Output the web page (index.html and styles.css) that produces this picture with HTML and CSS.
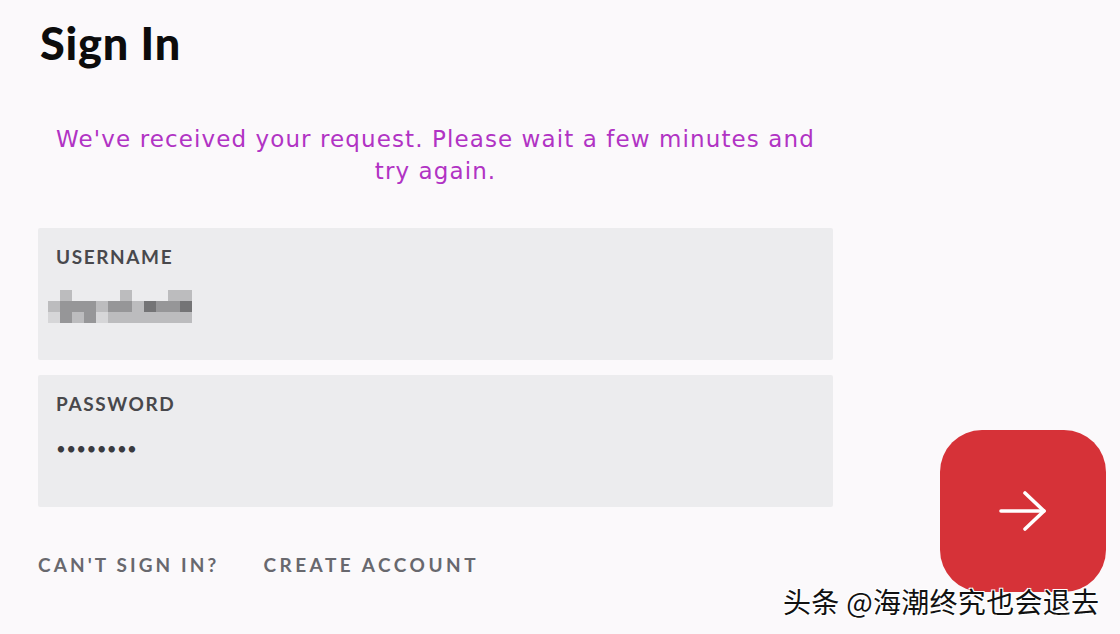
FILE: index.html
```html
<!DOCTYPE html>
<html lang="en">
<head>
  <meta charset="UTF-8">
  <title>Sign In</title>
  <link rel="stylesheet" href="styles.css">
</head>
<body>
  <div class="page">
    <h1 class="title">Sign In</h1>
    <div class="layout">
      <div class="form">
        <p class="notice">We've received your request. Please wait a few minutes and try again.</p>
        <div class="field">
          <div class="label">USERNAME</div>
          <div class="blur">
            <span></span><span class="l"></span><span></span><span></span><span></span><span></span><span class="l"></span><span></span><span></span><span></span><span class="l"></span><span class="l"></span>
            <span class="l"></span><span class="m"></span><span class="m"></span><span class="m"></span><span class="l"></span><span class="m"></span><span class="m"></span><span class="l"></span><span class="d"></span><span class="m"></span><span class="m"></span><span class="d"></span>
            <span class="f"></span><span class="m"></span><span class="l"></span><span class="m"></span><span class="f"></span><span class="l"></span><span class="l"></span><span class="l"></span><span class="l"></span><span class="l"></span><span class="l"></span><span class="l"></span>
          </div>
        </div>
        <div class="field">
          <div class="label">PASSWORD</div>
          <div class="dots">••••••••</div>
        </div>
        <div class="links">
          <a href="#">CAN'T SIGN IN?</a>
          <a href="#">CREATE ACCOUNT</a>
        </div>
      </div>
      <button class="go" aria-label="Sign in">
        <svg width="52" height="44" viewBox="0 0 52 44" fill="none" stroke="#fff" stroke-width="3.6" stroke-linecap="round" stroke-linejoin="round">
          <path d="M4 22 H47"/>
          <path d="M28 4 L47 22 L28 40"/>
        </svg>
      </button>
    </div>
  </div>
  <div class="mark">头条 @海潮终究也会退去</div>
</body>
</html>
```

FILE: styles.css
```css
body {
  margin: 0;
  background-color: #fbf9fb;
  font-family: Lato, "Open Sans", sans-serif;
  width: 1120px;
  height: 634px;
  overflow: hidden;
  position: relative;
}
.page {
  padding: 15px 0 0 38px;
}
.title {
  margin: 0 0 0 2px;
  font-size: 45px;
  font-weight: 900;
  letter-spacing: 0.8px;
  color: #0c0c0c;
  line-height: 56px;
}
.layout {
  display: flex;
  align-items: flex-start;
  gap: 107px;
}
.form {
  width: 795px;
}
.notice {
  margin: 52px auto 0;
  max-width: 775px;
  text-align: center;
  color: #b133c4;
  font-family: "DejaVu Sans", sans-serif;
  font-size: 23px;
  line-height: 32px;
  letter-spacing: 1.1px;
}
.field {
  margin-top: 41px;
  height: 132px;
  box-sizing: border-box;
  padding: 17px 18px 0;
  background-color: #ececee;
  border-radius: 2px;
}
.field + .field {
  margin-top: 15px;
}
.label {
  font-size: 19px;
  font-weight: 700;
  letter-spacing: 1.6px;
  color: #48484c;
  line-height: 24px;
}
.blur {
  display: grid;
  grid-template-columns: repeat(12, 12px);
  grid-auto-rows: 11px;
  margin: 21px 0 0 -8px;
  width: 144px;
}
.blur span { background-color: #ececee; }
.blur .f { background-color: #d6d6d8; }
.blur .l { background-color: #bcbcbe; }
.blur .m { background-color: #969698; }
.blur .d { background-color: #747476; }
.dots {
  margin-top: 22px;
  font-size: 17px;
  letter-spacing: 0.3px;
  color: #3a3a3e;
}
.links {
  display: flex;
  gap: 44px;
  margin-top: 46px;
}
.links a {
  color: #68686e;
  text-decoration: none;
  font-size: 19px;
  font-weight: 700;
  letter-spacing: 3.1px;
}
.links a + a {
  letter-spacing: 3.5px;
}
.go {
  margin-top: 359px;
  width: 166px;
  height: 162px;
  border: none;
  border-radius: 42px;
  background-color: #d63238;
  display: flex;
  align-items: center;
  justify-content: center;
  cursor: pointer;
}
.mark {
  position: absolute;
  left: 783px;
  top: 581px;
  font-family: "Noto Sans CJK SC", sans-serif;
  font-size: 28px;
  letter-spacing: 0.3px;
  color: #111;
  text-shadow: 1px 1px 0 #fff, -1px -1px 0 #fff, 1px -1px 0 #fff, -1px 1px 0 #fff;
}
```
